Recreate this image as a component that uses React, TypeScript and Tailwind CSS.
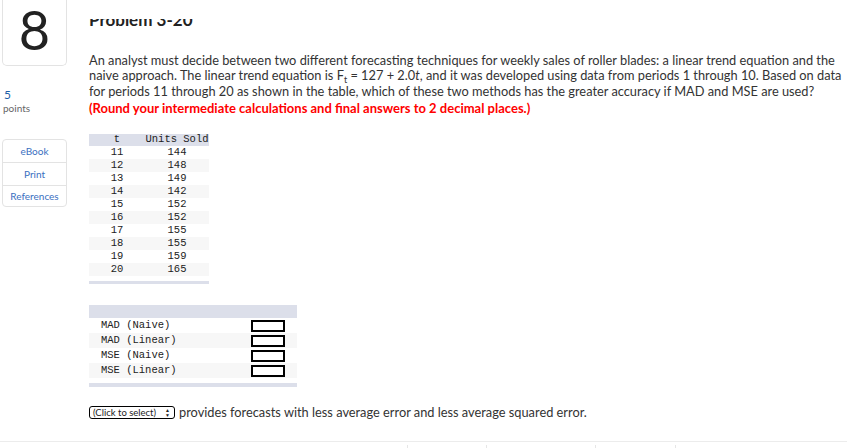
const units = [
  [11, 144],
  [12, 148],
  [13, 149],
  [14, 142],
  [15, 152],
  [16, 152],
  [17, 155],
  [18, 155],
  [19, 159],
  [20, 165],
];

const measures = ['MAD (Naive)', 'MAD (Linear)', 'MSE (Naive)', 'MSE (Linear)'];

const sans = "font-['Lato','Liberation_Sans',sans-serif]";
const mono = "font-['Liberation_Mono','Courier_New',monospace]";

export default function App() {
  return (
    <div className={`relative w-[847px] h-[448px] overflow-hidden bg-white text-[#333] ${sans}`}>
      <div className="flex">
        {/* left rail */}
        <div className="w-[89px] shrink-0 pl-[2px]">
          <div className="w-[65px] h-[66px] border border-t-0 border-[#e3e3e3] rounded-b-[5px] flex items-center justify-center">
            <span className="text-[54px] leading-none text-[#222] font-normal mt-[-5px]">8</span>
          </div>
          <div className="mt-[22px] pl-[2px] text-[12px] leading-[14px] text-[#1d5ea8]">5</div>
          <div className="pl-[1px] text-[10px] leading-[12px] text-[#666]">points</div>
          <div className="mt-[25px] w-[65px] border border-[#e3e3e3] rounded-[4px] text-[10px] text-[#3a70bf] text-center">
            <div className="h-[23px] flex items-center justify-center border-b border-[#e3e3e3]">eBook</div>
            <div className="h-[23px] flex items-center justify-center border-b border-[#e3e3e3]">Print</div>
            <div className="h-[20px] flex items-center justify-center">References</div>
          </div>
        </div>

        {/* question */}
        <div className="flex-1 pr-[12px]">
          <div className="mt-[19px] h-[7px] overflow-hidden flex items-end">
            <span className="text-[17px] leading-[17px] font-bold text-[#222] mb-[-1.5px]">Problem 3-20</span>
          </div>

          <div className="mt-[27px] text-[12.8px] leading-[14.5px] whitespace-nowrap">
            <div>An analyst must decide between two different forecasting techniques for weekly sales of roller blades: a linear trend equation and the</div>
            <div>
              naive approach. The linear trend equation is F
              <span className="text-[9px] leading-none align-[-3px]">t</span> = 127 + 2.0<i>t</i>, and it was developed using data from periods 1 through 10. Based on data
            </div>
            <div>for periods 11 through 20 as shown in the table, which of these two methods has the greater accuracy if MAD and MSE are used?</div>
            <div className="mt-[2.5px] text-[13px] font-bold text-[#f00]">(Round your intermediate calculations and final answers to 2 decimal places.)</div>
          </div>

          {/* data table */}
          <div className={`mt-[19px] w-[120px] text-[10.5px] text-[#222] ${mono}`}>
            <div className="flex h-[12px] items-center bg-[#dcdfea]">
              <div className="w-[56px] text-center">t</div>
              <div className="flex-1 text-center">Units Sold</div>
            </div>
            {units.map(([t, u], i) => (
              <div key={t} className={`flex h-[13px] items-center ${i % 2 === 1 ? 'bg-[#f7f7f7]' : ''}`}>
                <div className="w-[56px] text-center">{t}</div>
                <div className="flex-1 text-center">{u}</div>
              </div>
            ))}
            <div className="mt-[5px] h-[3px] bg-[#dcdfea]" />
          </div>

          {/* answers table */}
          <div className={`mt-[21px] w-[208px] text-[10.5px] text-[#222] ${mono}`}>
            <div className="h-[13px] bg-[#dcdfea]" />
            {measures.map((m, i) => (
              <div key={m} className={`flex h-[15px] items-center pl-[12px] pr-[12px] ${i % 2 === 1 ? 'bg-[#f7f7f7]' : ''}`}>
                <div className="flex-1">{m}</div>
                <div className="w-[34px] h-[12px] border-2 border-black bg-white" />
              </div>
            ))}
            <div className="mt-[5px] h-[4px] bg-[#dcdfea]" />
          </div>

          <div className="mt-[16px] flex items-center text-[12.8px] whitespace-nowrap">
            <div className="w-[86px] h-[13px] pl-[3px] pr-[4px] flex items-center justify-between border border-black rounded-[3px] text-[9.5px] leading-none text-[#222]">
              <span>(Click to select)</span>
              <span className="flex flex-col text-[5px] leading-[5px]">
                <span>▲</span>
                <span>▼</span>
              </span>
            </div>
            <span className="ml-[4px]">provides forecasts with less average error and less average squared error.</span>
          </div>
        </div>
      </div>

      {/* page footer line */}
      <div className="absolute left-0 right-0 top-[441px] h-[7px] border-t border-[#ececec]">
        <div className="absolute left-[407px] top-[3px] h-[4px] border-l border-[#e6e6e6]" />
        <div className="absolute left-[486px] top-[3px] h-[4px] border-l border-[#e6e6e6]" />
        <div className="absolute left-[595px] top-[3px] h-[4px] border-l border-[#e6e6e6]" />
        <div className="absolute left-[675px] top-[3px] h-[4px] border-l border-[#e6e6e6]" />
      </div>
    </div>
  );
}
